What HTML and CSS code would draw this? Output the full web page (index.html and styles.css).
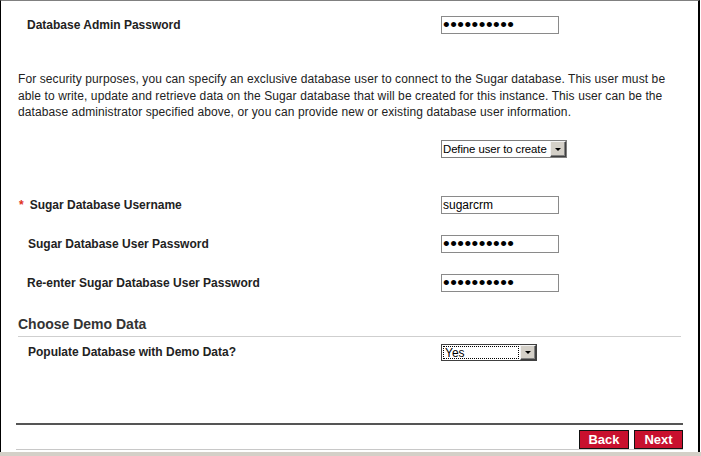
FILE: index.html
```html
<!DOCTYPE html>
<html>
<head>
<meta charset="utf-8">
<title>Database Configuration</title>
<link rel="stylesheet" href="styles.css">
</head>
<body>
<div class="frame">
  <div class="row row-first">
    <label class="label label-tight" for="adminpw">Database Admin Password</label>
    <input id="adminpw" type="password" class="field pw" value="xxxxxxxxxx">
  </div>

  <p class="note">For security purposes, you can specify an exclusive database user to connect to the Sugar database. This user must be able to write, update and retrieve data on the Sugar database that will be created for this instance. This user can be the database administrator specified above, or you can provide new or existing database user information.</p>

  <div class="row row-define">
    <span class="label"></span>
    <span class="select select-define">
      <select><option>Define user to create</option></select>
      <span class="arrow"></span>
    </span>
  </div>

  <div class="row row-user">
    <label class="label label-req" for="dbuser"><span class="req">*</span>Sugar Database Username</label>
    <input id="dbuser" type="text" class="field text" value="sugarcrm">
  </div>

  <div class="row row-gap">
    <label class="label" for="dbpw">Sugar Database User Password</label>
    <input id="dbpw" type="password" class="field pw" value="xxxxxxxxxx">
  </div>

  <div class="row row-gap">
    <label class="label label-tight" for="dbpw2">Re-enter Sugar Database User Password</label>
    <input id="dbpw2" type="password" class="field pw" value="xxxxxxxxxx">
  </div>

  <h2 class="section">Choose Demo Data</h2>

  <div class="row row-demo">
    <label class="label">Populate Database with Demo Data?</label>
    <span class="select select-yes">
      <select><option>Yes</option><option>No</option></select>
      <span class="arrow"></span>
    </span>
  </div>

  <div class="footer">
    <div class="buttons">
      <button class="btn btn-back" type="button">Back</button>
      <button class="btn btn-next" type="button">Next</button>
    </div>
  </div>
</div>
<div class="statusbar"></div>
</body>
</html>
```

FILE: styles.css
```css
* { box-sizing: border-box; }

html, body {
  margin: 0;
  padding: 0;
  background: #fff;
}

body {
  width: 701px;
  height: 456px;
  overflow: hidden;
  font-family: "Liberation Sans", Arial, sans-serif;
  font-size: 12px;
  color: #222;
}

.frame {
  width: 700px;
  height: 452px;
  border-top: 1px solid #808080;
  border-left: 1px solid #000;
  border-right: 2px solid #000;
  background: #fff;
  display: flex;
  flex-direction: column;
}

.statusbar {
  height: 4px;
  background: #d4d0c8;
}

.row {
  display: grid;
  grid-template-columns: 423px 1fr;
  align-items: center;
  height: 18px;
  padding-left: 17px;
}

.row-first { margin-top: 15px; }
.row-define { margin-top: 19px; }
.row-user { margin-top: 38px; }
.row-gap { margin-top: 21px; }
.row-demo { margin-top: 7px; height: 17px; }

.label {
  font-weight: bold;
  font-size: 12px;
  color: #222;
  padding-left: 10px;
}

.label-tight { padding-left: 9px; }

.label-req { padding-left: 0; }

.req {
  color: #e0301e;
  margin-right: 6px;
  margin-left: 1px;
}

.note {
  margin: 37px 0 0 0;
  padding: 0 20px 0 17px;
  font-size: 12px;
  line-height: 16.5px;
  letter-spacing: 0.1px;
  color: #222;
}

.field {
  width: 118px;
  height: 18px;
  margin: 0;
  border: 1px solid #8a8a8a;
  background: #fff;
  padding: 0 2px;
  font-family: "Liberation Sans", Arial, sans-serif;
  color: #000;
  outline: none;
}

.field.text {
  font-size: 12px;
  padding: 0 1px;
}

.field.pw {
  font-size: 19px;
  padding: 0 0 0 1px;
  letter-spacing: 0.5px;
  line-height: 16px;
}

.select {
  display: flex;
  align-items: stretch;
  background: #fff;
  border: 1px solid #7f7f7f;
  height: 18px;
}

.select-define { width: 126px; }
.select-yes {
  width: 96px;
  height: 17px;
  border-color: #404040;
}

.select select {
  flex: 1;
  min-width: 0;
  appearance: none;
  -webkit-appearance: none;
  border: 0;
  background: transparent;
  margin: 0;
  padding: 0 0 0 1px;
  font-family: "Liberation Sans", Arial, sans-serif;
  font-size: 12px;
  color: #000;
  outline: none;
}

.select-define select {
  font-size: 11.4px;
  letter-spacing: -0.1px;
}

.select-yes select {
  outline: 1px dotted #000;
  outline-offset: -1px;
  margin: 1px 1px 1px 1px;
  padding: 0 2px;
}

.arrow {
  width: 16px;
  background: #d4d0c8;
  border: 1px solid;
  border-color: #f4f4f4 #404040 #404040 #f4f4f4;
  box-shadow: inset -1px -1px 0 #808080;
  display: flex;
  align-items: center;
  justify-content: center;
  margin: 0;
}

.arrow::after {
  content: "";
  width: 0;
  height: 0;
  border-left: 3px solid transparent;
  border-right: 3px solid transparent;
  border-top: 3px solid #000;
  margin-top: 1px;
}

.section {
  margin: 24px 17px 0 17px;
  padding: 0 0 3px 0;
  font-size: 14px;
  line-height: 17px;
  font-weight: bold;
  color: #333;
  border-bottom: 1px solid #cfcfcf;
}

.footer {
  margin-top: auto;
  padding: 0 15px 3px 15px;
}

.buttons {
  border-top: 2px solid #555;
  box-shadow: 0 1px 0 #c8c8c8;
  display: flex;
  justify-content: flex-end;
  gap: 5px;
  padding-top: 5px;
}

.btn {
  height: 19px;
  margin: 0;
  padding: 0;
  border: 1px solid #111;
  background: #c8102e;
  color: #fff;
  font-family: "Liberation Sans", Arial, sans-serif;
  font-weight: bold;
  font-size: 13px;
  line-height: 17px;
  cursor: pointer;
}

.btn-back { width: 50px; }
.btn-next { width: 49px; }
```
